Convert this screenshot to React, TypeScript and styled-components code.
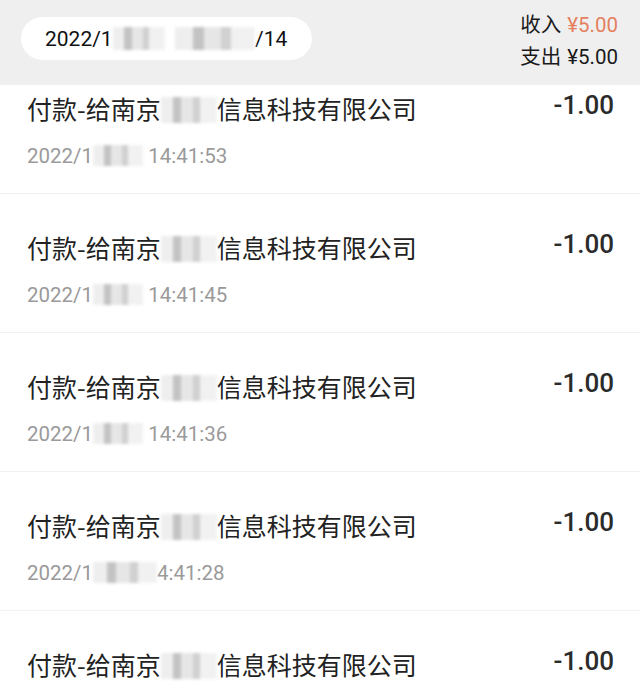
import React from 'react';
import styled, { createGlobalStyle } from 'styled-components';

const GlobalStyle = createGlobalStyle`
  html, body {
    margin: 0;
    padding: 0;
    background: #ffffff;
  }
  body {
    font-family: Roboto, "Noto Sans CJK SC", sans-serif;
    -webkit-font-smoothing: antialiased;
  }
`;

const Page = styled.div`
  width: 640px;
  height: 689px;
  overflow: hidden;
  background: #ffffff;
`;

const Header = styled.header`
  position: relative;
  z-index: 1;
  height: 85px;
  box-sizing: border-box;
  display: flex;
  align-items: flex-start;
  justify-content: space-between;
  padding: 9px 22px 0 21px;
  background: #efefef;
`;

const DatePill = styled.div`
  margin-top: 8px;
  width: 291px;
  height: 43px;
  box-sizing: border-box;
  display: flex;
  align-items: center;
  padding-left: 24px;
  border-radius: 22px;
  background: #ffffff;
  color: #111111;
  font-size: 21px;
  white-space: nowrap;
`;

const Totals = styled.div`
  display: flex;
  flex-direction: column;
  align-items: flex-end;
  font-size: 20.5px;
  line-height: 32px;
  color: #1a1a1a;
`;

const Money = styled.span<{ $accent?: boolean }>`
  margin-left: 6px;
  color: ${({ $accent }) => ($accent ? '#e5805f' : '#1a1a1a')};
`;

const Redact = styled.span<{ $w: number }>`
  display: inline-block;
  width: ${({ $w }) => $w}px;
  height: 1.05em;
  vertical-align: -0.15em;
  background: linear-gradient(
    90deg,
    #ececec 0 22%,
    #b9b9b9 22% 36%,
    #e2e2e2 36% 58%,
    #c9c9c9 58% 70%,
    #efefef 70%
  );
  filter: blur(1.6px);
  opacity: 0.85;
`;

const List = styled.ul`
  list-style: none;
  margin: -30px 0 0;
  padding: 0;
`;

const Row = styled.li`
  display: flex;
  align-items: flex-start;
  justify-content: space-between;
  height: 101px;
  padding: 37px 26px 0 27px;
  border-bottom: 1px solid #f2f2f2;
`;

const Info = styled.div`
  display: flex;
  flex-direction: column;
  gap: 18px;
`;

const Title = styled.p`
  margin: 0;
  font-family: "Noto Sans CJK SC", Roboto, sans-serif;
  font-size: 25px;
  line-height: 32px;
  color: #222222;
  white-space: nowrap;
`;

const Time = styled.p`
  margin: 0;
  font-size: 20.5px;
  line-height: 28px;
  color: #9a9a9a;
  white-space: nowrap;
`;

const Amount = styled.span`
  margin-top: -3px;
  font-size: 26px;
  line-height: 32px;
  font-weight: 500;
  color: #2b2b2b;
`;

interface Record {
  head: string;
  tail: string;
  cut: number;
}

const records: Record[] = [
  { head: '2022/1', tail: ' 14:41:53', cut: 50 },
  { head: '2022/1', tail: ' 14:41:45', cut: 50 },
  { head: '2022/1', tail: ' 14:41:36', cut: 50 },
  { head: '2022/1', tail: '4:41:28', cut: 64 },
  { head: '2022/1', tail: ' 14:41:20', cut: 50 },
];

export default function App() {
  return (
    <Page>
      <GlobalStyle />
      <Header>
        <DatePill>
          2022/1
          <Redact $w={52} />
          &nbsp;&nbsp;
          <Redact $w={80} />
          /14
        </DatePill>
        <Totals>
          <div>
            收入<Money $accent>¥5.00</Money>
          </div>
          <div>
            支出<Money>¥5.00</Money>
          </div>
        </Totals>
      </Header>
      <List>
        {records.map(({ head, tail, cut }, i) => (
          <Row key={i}>
            <Info>
              <Title>
                付款-给南京
                <Redact $w={56} />
                信息科技有限公司
              </Title>
              <Time>
                {head}
                <Redact $w={cut} />
                {tail}
              </Time>
            </Info>
            <Amount>-1.00</Amount>
          </Row>
        ))}
      </List>
    </Page>
  );
}
